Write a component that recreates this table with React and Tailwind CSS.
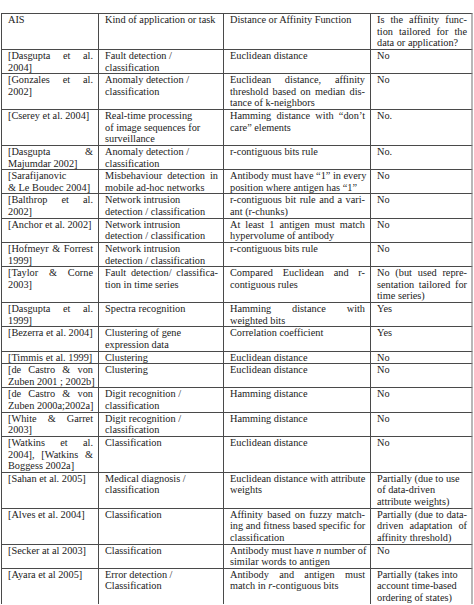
const rows = [
  [['AIS'], ['Kind of application or task'], ['Distance or Affinity Function'], ['Is the affinity func-', 'tion tailored for the', 'data or application?']],
  [['[Dasgupta et al.', '2004]'], ['Fault detection /', 'classification'], ['Euclidean distance'], ['No']],
  [['[Gonzales et al.', '2002]'], ['Anomaly detection /', 'classification'], ['Euclidean distance, affinity', 'threshold based on median dis-', 'tance of k-neighbors'], ['No']],
  [['[Cserey et al. 2004]'], ['Real-time processing', 'of image sequences for', 'surveillance'], ['Hamming distance with \u201cdon\u2019t', 'care\u201d elements'], ['No.']],
  [['[Dasgupta &', 'Majumdar 2002]'], ['Anomaly detection /', 'classification'], ['r-contiguous bits rule'], ['No.']],
  [['[Sarafijanovic', '& Le Boudec 2004]'], ['Misbehaviour detection in', 'mobile ad-hoc networks'], ['Antibody must have \u201c1\u201d in every', 'position where antigen has \u201c1\u201d'], ['No'], { j2: true }],
  [['[Balthrop et al.', '2002]'], ['Network intrusion', 'detection / classification'], ['r-contiguous bit rule and a vari-', 'ant (r-chunks)'], ['No']],
  [['[Anchor et al. 2002]'], ['Network intrusion', 'detection / classification'], ['At least 1 antigen must match', 'hypervolume of antibody'], ['No']],
  [['[Hofmeyr & Forrest', '1999]'], ['Network intrusion', 'detection / classification'], ['r-contiguous bits rule'], ['No']],
  [['[Taylor & Corne', '2003]'], ['Fault detection/ classifica-', 'tion in time series'], ['Compared Euclidean and r-', 'contiguous rules'], ['No (but used repre-', 'sentation tailored for', 'time series)'], { j2: true }],
  [['[Dasgupta et al.', '1999]'], ['Spectra recognition'], ['Hamming distance with', 'weighted bits'], ['Yes']],
  [['[Bezerra et al. 2004]'], ['Clustering of gene', 'expression data'], ['Correlation coefficient'], ['Yes']],
  [['[Timmis et al. 1999]'], ['Clustering'], ['Euclidean distance'], ['No']],
  [['[de Castro & von', 'Zuben 2001 ; 2002b]'], ['Clustering'], ['Euclidean distance'], ['No']],
  [['[de Castro & von', 'Zuben 2000a;2002a]'], ['Digit recognition /', 'classification'], ['Hamming distance'], ['No']],
  [['[White & Garret', '2003]'], ['Digit recognition /', 'classification'], ['Hamming distance'], ['No']],
  [['[Watkins et al.', '2004], [Watkins &', 'Boggess 2002a]'], ['Classification'], ['Euclidean distance'], ['No']],
  [['[Sahan et al. 2005]'], ['Medical diagnosis /', 'classification'], ['Euclidean distance with attribute', 'weights'], ['Partially (due to use', 'of data-driven', 'attribute weights)'], { j4: false }],
  [['[Alves et al. 2004]'], ['Classification'], ['Affinity based on fuzzy match-', 'ing and fitness based specific for', 'classification'], ['Partially (due to data-', 'driven adaptation of', 'affinity threshold)']],
  [['[Secker at al 2003]'], ['Classification'], [<>Antibody must have <i>n</i> number of</>, 'similar words to antigen'], ['No']],
  [['[Ayara et al 2005]'], ['Error detection /', 'Classification'], ['Antibody and antigen must', <>match in <i>r</i>-contiguous bits</>], ['Partially (takes into', 'account time-based', 'ordering of states)'], { j4: false }],
];

function Cell({ lines, justify, last }) {
  return (
    <div
      className={
        last
          ? 'border-l border-t border-[#4a4a4a] border-r-2 border-r-[#b8b8b8] pl-[6px] pr-[4px]'
          : 'border-l border-t border-[#4a4a4a] pl-[6px] pr-[5px]'
      }
    >
      {lines.map((ln, i) => (
        <div
          key={i}
          className={justify && i < lines.length - 1 ? 'whitespace-nowrap text-justify [text-align-last:justify]' : 'whitespace-nowrap'}
        >
          {ln}
        </div>
      ))}
    </div>
  );
}

export default function App() {
  return (
    <div className="w-[474px] h-[605px] overflow-hidden bg-white pt-[13px] pl-px [font-family:'Liberation_Serif','Times_New_Roman',serif] text-[10.3px] leading-[11.63px] text-[#222]">
      <div className="grid grid-cols-[97px_125px_147px_103px]">
        {rows.map((r, ri) => {
          const opt = r[4] || {};
          return [
            <Cell key={`${ri}-0`} lines={r[0]} justify />,
            <Cell key={`${ri}-1`} lines={r[1]} justify={!!opt.j2} />,
            <Cell key={`${ri}-2`} lines={r[2]} justify />,
            <Cell key={`${ri}-3`} lines={r[3]} justify={opt.j4 !== false} last />,
          ];
        })}
      </div>
    </div>
  );
}
